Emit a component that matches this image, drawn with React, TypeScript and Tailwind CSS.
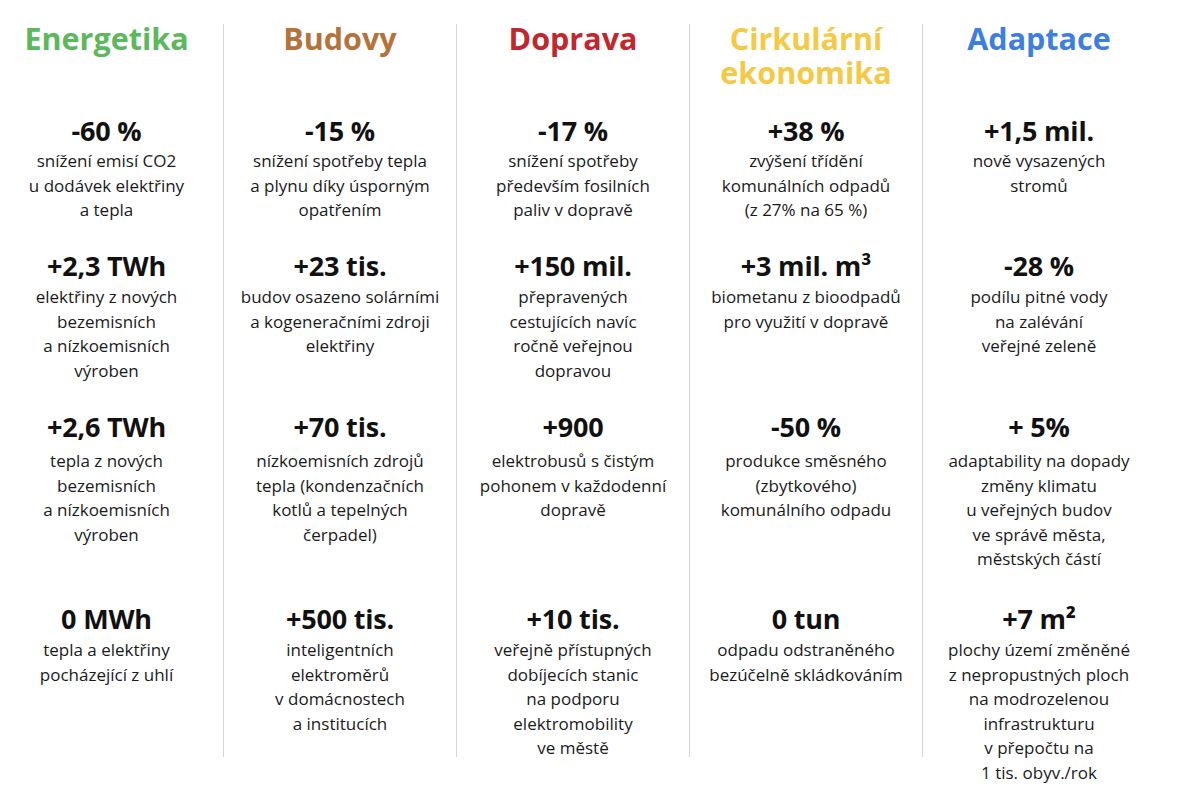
import React from "react";

type Stat = { v: string; d: string[] };
type Col = { title: string[]; color: string; stats: Stat[] };

const cols: Col[] = [
  {
    title: ["Energetika"],
    color: "text-[#5cb85c]",
    stats: [
      { v: "-60 %", d: ["snížení emisí CO2", "u dodávek elektřiny", "a tepla"] },
      { v: "+2,3 TWh", d: ["elektřiny z nových", "bezemisních", "a nízkoemisních", "výroben"] },
      { v: "+2,6 TWh", d: ["tepla z nových", "bezemisních", "a nízkoemisních", "výroben"] },
      { v: "0 MWh", d: ["tepla a elektřiny", "pocházející z uhlí"] },
    ],
  },
  {
    title: ["Budovy"],
    color: "text-[#b5733a]",
    stats: [
      { v: "-15 %", d: ["snížení spotřeby tepla", "a plynu díky úsporným", "opatřením"] },
      { v: "+23 tis.", d: ["budov osazeno solárními", "a kogeneračními zdroji", "elektřiny"] },
      { v: "+70 tis.", d: ["nízkoemisních zdrojů", "tepla (kondenzačních", "kotlů a tepelných", "čerpadel)"] },
      { v: "+500 tis.", d: ["inteligentních", "elektroměrů", "v domácnostech", "a institucích"] },
    ],
  },
  {
    title: ["Doprava"],
    color: "text-[#c1272d]",
    stats: [
      { v: "-17 %", d: ["snížení spotřeby", "především fosilních", "paliv v dopravě"] },
      { v: "+150 mil.", d: ["přepravených", "cestujících navíc", "ročně veřejnou", "dopravou"] },
      { v: "+900", d: ["elektrobusů s čistým", "pohonem v každodenní", "dopravě"] },
      { v: "+10 tis.", d: ["veřejně přístupných", "dobíjecích stanic", "na podporu", "elektromobility", "ve městě"] },
    ],
  },
  {
    title: ["Cirkulární", "ekonomika"],
    color: "text-[#f5c945]",
    stats: [
      { v: "+38 %", d: ["zvýšení třídění", "komunálních odpadů", "(z 27% na 65 %)"] },
      { v: "+3 mil. m³", d: ["biometanu z bioodpadů", "pro využití v dopravě"] },
      { v: "-50 %", d: ["produkce směsného", "(zbytkového)", "komunálního odpadu"] },
      { v: "0 tun", d: ["odpadu odstraněného", "bezúčelně skládkováním"] },
    ],
  },
  {
    title: ["Adaptace"],
    color: "text-[#3d7fe0]",
    stats: [
      { v: "+1,5 mil.", d: ["nově vysazených", "stromů"] },
      { v: "-28 %", d: ["podílu pitné vody", "na zalévání", "veřejné zeleně"] },
      { v: "+ 5%", d: ["adaptability na dopady", "změny klimatu", "u veřejných budov", "ve správě města,", "městských částí"] },
      { v: "+7 m²", d: ["plochy území změněné", "z nepropustných ploch", "na modrozelenou", "infrastrukturu", "v přepočtu na", "1 tis. obyv./rok"] },
    ],
  },
];

const rowH = ["h-[135px]", "h-[161px]", "h-[192px]", ""];
const descMt = ["mt-[3px]", "mt-[4px]", "mt-[7px]", "mt-[4px]"];

function StatBlock({ s, i }: { s: Stat; i: number }) {
  return (
    <div className={`${rowH[i]} shrink-0 flex flex-col items-center`}>
      <div className="text-[27px] leading-[30px] font-bold text-[#111111] tracking-[-0.2px] whitespace-nowrap">{s.v}</div>
      <div className={`${descMt[i]} text-[17px] leading-[24.5px] text-[#1a1a1a] whitespace-nowrap`}>
        {s.d.map((l, k) => (
          <div key={k}>{l}</div>
        ))}
      </div>
    </div>
  );
}

export default function App() {
  return (
    <div
      className="w-[1200px] h-[802px] bg-white overflow-hidden"
      style={{ fontFamily: '"Open Sans", "Noto Sans", sans-serif' }}
    >
      <div className="flex ml-[-10px] pt-[24px]">
        {cols.map((c, ci) => (
          <div
            key={ci}
            className={`w-[233px] h-[733px] shrink-0 flex flex-col text-center ${ci > 0 ? "border-l border-[#d6d6d6]" : ""}`}
          >
            <div className={`mt-[-3px] h-[95px] shrink-0 text-[30.5px] leading-[34px] font-bold ${c.color}`}>
              {c.title.map((t, k) => (
                <div key={k}>{t}</div>
              ))}
            </div>
            {c.stats.map((s, i) => (
              <StatBlock key={i} s={s} i={i} />
            ))}
          </div>
        ))}
      </div>
    </div>
  );
}
